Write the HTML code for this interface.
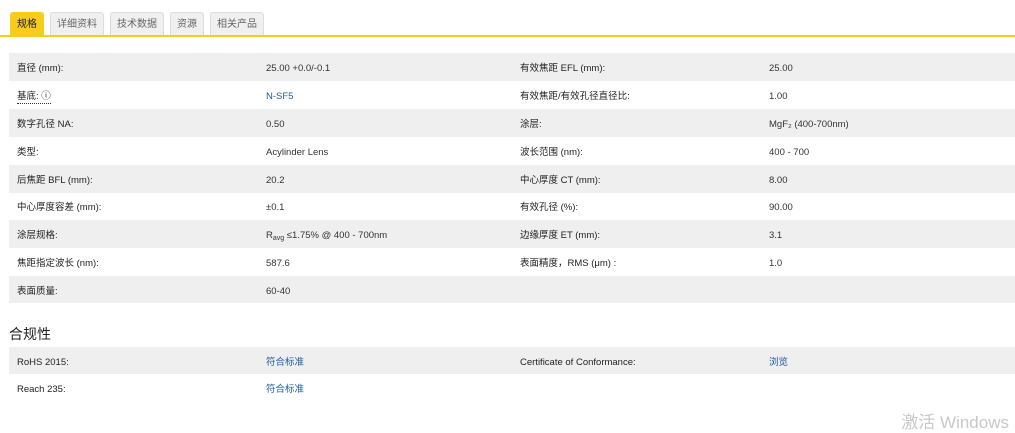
<!DOCTYPE html>
<html><head><meta charset="utf-8"><style>
body{margin:0;width:1015px;height:430px;overflow:hidden;background:#fff;font-family:"Liberation Sans","Noto Sans CJK SC",sans-serif;font-size:10px;color:#333;position:relative}
.tabs{position:absolute;top:12px;left:10px;display:flex;gap:6px}
.tab{height:23px;line-height:24px;padding:0 6px;background:#f0f0f0;border:1px solid #ddd;border-bottom:none;border-radius:3px 3px 0 0;color:#666;font-size:10px;box-sizing:border-box}
.tab.on{background:#f7cc1b;border-color:#f7cc1b;color:#222;height:24px}
.line{position:absolute;top:35px;left:0;width:1015px;height:2px;background:#f7cc1b}
.row{position:absolute;left:9px;width:1006px;height:28px;font-size:9.5px;color:#333}
.row.g{background:#efefef}
.row div{position:absolute;top:2px;height:28px;line-height:28px;white-space:nowrap}
.c1{left:8px;color:#222}.c2{left:257px}.c3{left:511px;color:#222}.c4{left:760px}
a{color:#1e5aa0;text-decoration:none}
sub{font-size:7px;line-height:0;vertical-align:-2px}
h3{position:absolute;left:9px;top:324px;margin:0;font-size:14px;font-weight:normal;color:#222}
.wm{position:absolute;right:6px;top:413px;font-size:17px;color:#c8c8c8;line-height:20px}
</style></head><body>
<div class="tabs"><div class="tab on">规格</div><div class="tab">详细资料</div><div class="tab">技术数据</div><div class="tab">资源</div><div class="tab">相关产品</div></div>
<div class="line"></div>
<div class="row g" style="top:53px"><div class="c1">直径 (mm):</div><div class="c2">25.00 +0.0/-0.1</div><div class="c3">有效焦距 EFL (mm):</div><div class="c4">25.00</div></div>
<div class="row" style="top:81px"><div class="c1"><span style="border-bottom:1px dotted #333;line-height:12px;display:inline-block">基底: ⓘ</span></div><div class="c2"><a>N-SF5</a></div><div class="c3">有效焦距/有效孔径直径比:</div><div class="c4">1.00</div></div>
<div class="row g" style="top:109px"><div class="c1">数字孔径 NA:</div><div class="c2">0.50</div><div class="c3">涂层:</div><div class="c4">MgF₂ (400-700nm)</div></div>
<div class="row" style="top:137px"><div class="c1">类型:</div><div class="c2">Acylinder Lens</div><div class="c3">波长范围 (nm):</div><div class="c4">400 - 700</div></div>
<div class="row g" style="top:165px"><div class="c1">后焦距 BFL (mm):</div><div class="c2">20.2</div><div class="c3">中心厚度 CT (mm):</div><div class="c4">8.00</div></div>
<div class="row" style="top:192px"><div class="c1">中心厚度容差 (mm):</div><div class="c2">±0.1</div><div class="c3">有效孔径 (%):</div><div class="c4">90.00</div></div>
<div class="row g" style="top:220px"><div class="c1">涂层规格:</div><div class="c2">R<sub>avg</sub> ≤1.75% @ 400 - 700nm</div><div class="c3">边缘厚度 ET (mm):</div><div class="c4">3.1</div></div>
<div class="row" style="top:248px"><div class="c1">焦距指定波长 (nm):</div><div class="c2">587.6</div><div class="c3">表面精度，RMS (μm) :</div><div class="c4">1.0</div></div>
<div class="row g" style="top:276px;height:27px"><div class="c1">表面质量:</div><div class="c2">60-40</div></div>
<h3>合规性</h3>
<div class="row g" style="top:347px;height:27px"><div class="c1">RoHS 2015:</div><div class="c2"><a>符合标准</a></div><div class="c3">Certificate of Conformance:</div><div class="c4"><a>浏览</a></div></div>
<div class="row" style="top:374px"><div class="c1">Reach 235:</div><div class="c2"><a>符合标准</a></div></div>
<div class="wm">激活 Windows</div>
</body></html>
